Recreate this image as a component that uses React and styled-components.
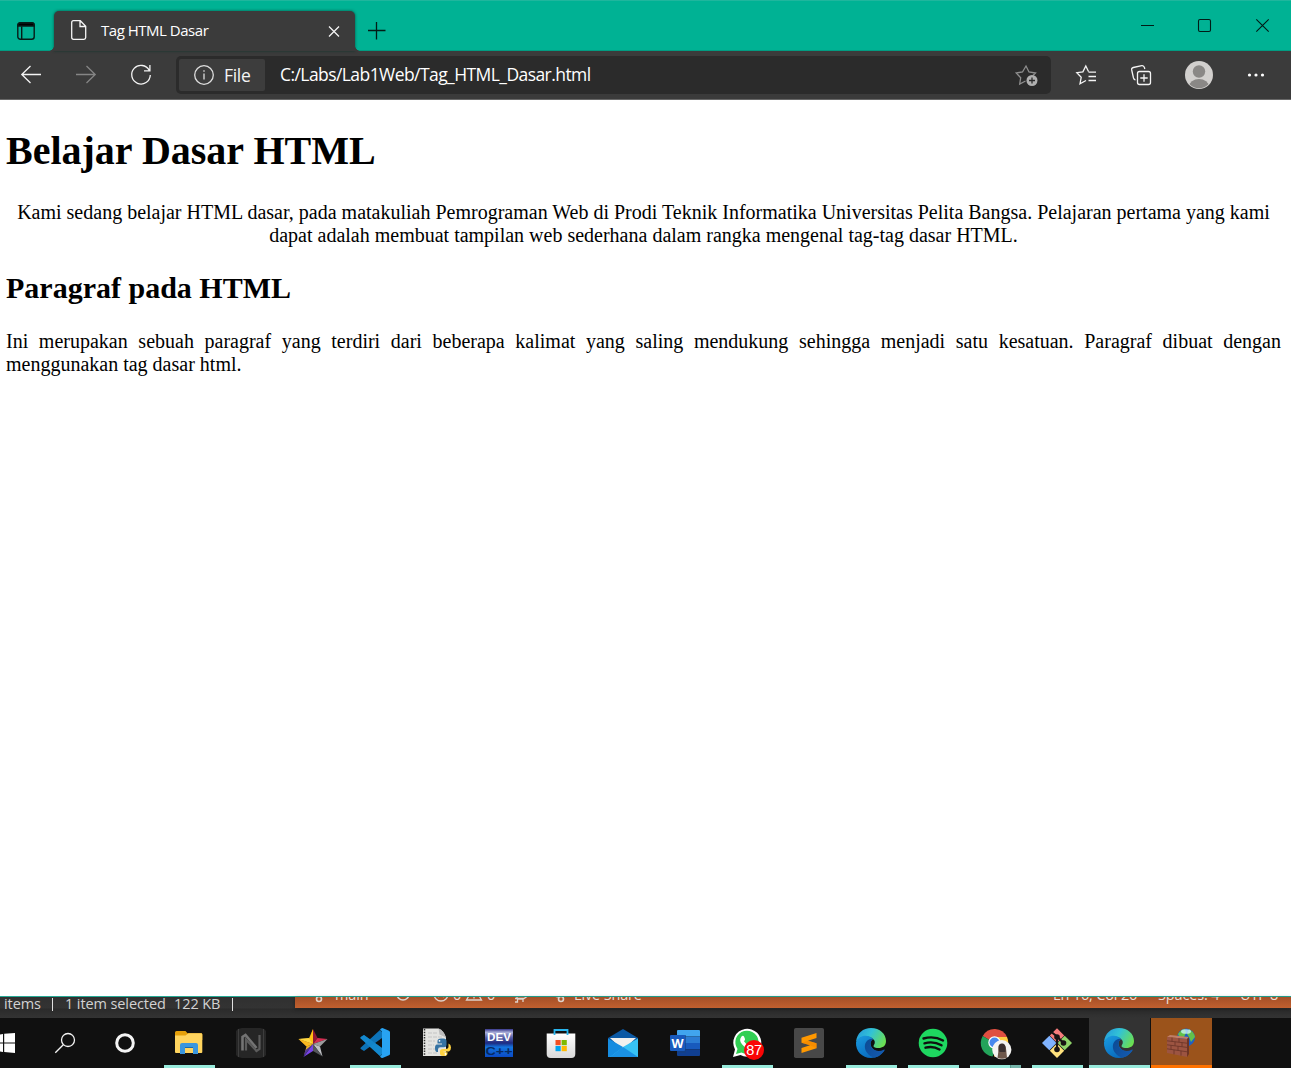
import React from "react";
import styled, { createGlobalStyle } from "styled-components";

const GlobalStyle = createGlobalStyle`
  html, body { margin: 0; padding: 0; }
  body { background: #fff; overflow: hidden; }
  * { box-sizing: border-box; }
`;

const ui = `"Open Sans", "Noto Sans", sans-serif`;

const Screen = styled.div`
  width: 1291px;
  height: 1068px;
  display: flex;
  flex-direction: column;
  overflow: hidden;
  font-family: ${ui};
`;

const Glyph = styled.svg`
  display: block;
  flex: none;
  overflow: visible;
  fill: none;
  stroke: ${(p) => p.$color || "#f4f4f4"};
  stroke-width: ${(p) => p.$weight || 1.3};
`;

const Art = styled.svg`
  display: block;
  flex: none;
  overflow: visible;
`;

/* ---------- title bar ---------- */

const TitleBar = styled.header`
  height: 51px;
  flex: none;
  display: flex;
  background: #00b294;
  border-top: 1px solid #1fb69d;
  box-shadow: inset 0 -1px 0 #019c82;
`;

const TabActions = styled.div`
  width: 54px;
  padding: 21px 0 0 17px;
`;

const Tab = styled.div`
  position: relative;
  width: 301px;
  height: 40px;
  margin-top: 10px;
  padding: 0 14px 2px 16px;
  display: flex;
  align-items: center;
  background: #3b3b3b;
  border-radius: 5px 5px 0 0;
  box-shadow: 0 0 3px rgba(0, 50, 40, 0.75);
  &::before, &::after {
    content: "";
    position: absolute;
    bottom: 0;
    width: 5px;
    height: 5px;
  }
  &::before { left: -5px; background: radial-gradient(circle at 0 0, transparent 4.5px, #3b3b3b 5px); }
  &::after { right: -5px; background: radial-gradient(circle at 100% 0, transparent 4.5px, #3b3b3b 5px); }
`;

const TabTitle = styled.span`
  flex: 1;
  margin-left: 14px;
  color: #fff;
  font-size: 15px;
  line-height: 20px;
  letter-spacing: -0.48px;
  white-space: nowrap;
`;

const TabClose = styled.div`
  padding-top: 2px;
`;

const NewTab = styled.div`
  width: 42px;
  padding: 21px 0 0 13px;
`;

const WindowButtons = styled.div`
  margin-left: auto;
  height: 49px;
  display: flex;
`;

const WindowButton = styled.div`
  width: ${(p) => p.$w || 57}px;
  display: flex;
  align-items: center;
  justify-content: center;
`;

/* ---------- toolbar ---------- */

const Toolbar = styled.div`
  height: 49px;
  flex: none;
  display: flex;
  align-items: center;
  background: #3b3b3b;
  border-bottom: 1px solid #686868;
`;

const Tool = styled.div`
  width: ${(p) => p.$w}px;
  display: flex;
  justify-content: center;
  align-items: center;
`;

const AddressBar = styled.div`
  width: 875px;
  height: 38px;
  margin-left: 6px;
  padding: 3px 12px 3px 3px;
  display: flex;
  align-items: center;
  background: #2b2b2b;
  border-radius: 5px;
`;

const FileChip = styled.div`
  width: 86px;
  height: 32px;
  padding-left: 14px;
  display: flex;
  align-items: center;
  gap: 9px;
  background: #3d3d3d;
  border-radius: 2px;
  color: #f5f5f5;
  font-size: 17.5px;
  letter-spacing: -0.3px;
`;

const Url = styled.span`
  flex: 1;
  margin-left: 15px;
  padding-bottom: 2px;
  color: #fff;
  font-size: 17.5px;
  line-height: 24px;
  letter-spacing: -0.57px;
  white-space: nowrap;
`;

/* ---------- document ---------- */

const Document = styled.main`
  height: 896px;
  flex: none;
  padding: 27px 10px 0 6px;
  background: #fff;
  color: #000;
  font-family: "Liberation Serif", "Times New Roman", serif;
  font-size: 20px;
  line-height: 23px;
`;

const Heading = styled.h1`
  margin: 0 0 27px;
  font-size: 40px;
  line-height: 47px;
`;

const SubHeading = styled.h2`
  margin: 24px 0 25px;
  font-size: 30px;
  line-height: 34px;
`;

const Paragraph = styled.p`
  margin: 0;
  text-align: ${(p) => p.$align};
`;

/* ---------- windows peeking above the taskbar ---------- */

const Behind = styled.div`
  height: 22px;
  flex: none;
  display: flex;
  background: linear-gradient(#303030, #333 50%, #2b2b2b 58%, #333);
  border-top: 1px solid #25a995;
`;

const ExplorerStatus = styled.div`
  width: 295px;
  height: 14px;
  padding-left: 4px;
  display: flex;
  align-items: center;
  color: #d2d2d2;
  font-size: 14.5px;
  line-height: 14px;
  white-space: nowrap;
`;

const StatusText = styled.span`
  width: ${(p) => p.$w}px;
  letter-spacing: -0.1px;
`;

const StatusRule = styled.i`
  width: 1px;
  height: 13px;
  margin-right: ${(p) => p.$gap || 0}px;
  background: #e0e0e0;
`;

const EditorStatus = styled.div`
  flex: 1;
  height: 11px;
  padding-left: 18px;
  display: flex;
  align-items: flex-end;
  overflow: hidden;
  background: linear-gradient(#a44f27, #c1602f);
  box-shadow: 0 1px 4px rgba(0, 0, 0, 0.35);
`;

const EditorText = styled.span`
  flex: none;
  width: ${(p) => p.$w}px;
  height: 24px;
  color: #ecdcd3;
  font-size: 14.5px;
  line-height: 22px;
  letter-spacing: -0.15px;
  white-space: nowrap;
`;

const EditorIcon = styled.span`
  flex: none;
  width: ${(p) => p.$w}px;
  height: 21px;
`;

/* ---------- taskbar ---------- */

const Taskbar = styled.footer`
  height: 50px;
  flex: none;
  display: flex;
  background: #101010;
`;

const SystemSlot = styled.div`
  width: ${(p) => p.$w}px;
  display: flex;
  align-items: center;
`;

const AppSlot = styled.div`
  width: 62px;
  height: 50px;
  display: flex;
  flex-direction: column;
  align-items: center;
  background: ${(p) => p.$fill || "transparent"};
  border-left: 1px solid #101010;
`;

const AppIcon = styled.div`
  position: relative;
  width: 31px;
  height: 47px;
  padding-top: 10px;
`;

const Indicator = styled.div`
  width: ${(p) => (p.$wide ? 61 : 51)}px;
  height: 3px;
  background: ${(p) => p.$color};
`;

const Badge = styled.span`
  position: absolute;
  left: 12px;
  top: 22px;
  width: 20px;
  height: 20px;
  border-radius: 50%;
  background: #fa0505;
  color: #fff;
  font: 14.500px/20px "Liberation Sans", Arial, sans-serif;
  text-align: center;
  letter-spacing: -0.2px;
`;

const Sq = ({ children }) => (
  <Art width="30" height="30" viewBox="0 0 30 30">{children}</Art>
);

const ExplorerIcon = () => (
  <Sq>
    <path d="M1 4.5Q1 3 2.500 3h9l2 2.200H27Q28.300 5.200 28.300 6.500V12H1z" fill="#e5a00a" />
    <path d="M1 7.500h10.500l3-2.300H27q1.300 0 1.300 1.300v17.400q0 1-1 1H2q-1 0-1-1z" fill="#ffd45e" />
    <path d="M6 26v-9q0-2 2-2h14q2 0 2 2v9h-5v-6.500h-8V26z" fill="#3a96dd" />
    <path d="M11 19h8v1h-8z" fill="#1769ad" />
  </Sq>
);

const NoxIcon = () => (
  <Sq>
    <path d="M2 1l4-1h18l4 1 2 2v24l-2 2-4 1H6l-4-1-2-2V3z" fill="#262626" />
    <path d="M2.500 1v28M27.500 1v28" stroke="#3d3d3d" />
    <path d="M6.500 22.500V9l3-2 11 13" fill="none" stroke="#747474" strokeWidth="2.600" />
    <path d="M23.500 7v14l-3 2L10 11.500v11" fill="none" stroke="#5c5c5c" strokeWidth="2.200" />
  </Sq>
);

const StarIcon = () => (
  <Sq>
    <path d="M15 1v15l-4-5z" fill="#ffb900" />
    <path d="M15 1l4.500 9L15 16z" fill="#8e1833" />
    <path d="M.5 11L11 10l4 6z" fill="#ffe45a" />
    <path d="M.5 11l8 7.500L15 16z" fill="#f5a719" />
    <path d="M19.500 10L29.500 11 15 16z" fill="#d62b50" />
    <path d="M29.500 11L22 18.500 15 16z" fill="#9b9b9d" />
    <path d="M22 18.500l2.500 10L15 16z" fill="#bfc0c4" />
    <path d="M24.500 28.500L15 23v-7z" fill="#55575b" />
    <path d="M15 16v7l-9.500 6z" fill="#7742e8" />
    <path d="M8.500 18.500L15 16 6.500 26z" fill="#f5b928" />
    <path d="M5.500 29l2-7L15 16z" fill="#4f3694" />
    <path d="M.5 11L11 10l4-9v15L8.500 18.500z" fill="#ffc928" opacity=".5" />
  </Sq>
);

const CodeIcon = () => (
  <Sq>
    <path d="M.8 10.500L20 28l2-2v-6L4 7 .8 9q-.8.700 0 1.500z" fill="#0f80c5" />
    <path d="M.8 19.500L20 2l2 2v6L4 23 .8 21q-.8-.8 0-1.500z" fill="#0d73b8" />
    <path d="M.8 10.500L20 28l2-2v-6L4 7 .8 9q-.8.700 0 1.500z" fill="#168bd2" opacity=".7" />
    <path d="M22.500 0L29 2.800q1 .5 1 1.500v21.400q0 1-1 1.500L22.500 30q-1.500 0-2.500-1.500l2-2V3.500l-2-2Q21 0 22.500 0z" fill="#28a3f2" />
  </Sq>
);

const PythonIcon = () => (
  <Sq>
    <path d="M1 .5h15.500q5 2 7.500 9v18.500H1z" fill="#e4e4e1" />
    <path d="M16.500.5l1 6 6.500 3q-2-7-7.500-9z" fill="#bcbcbc" />
    <path d="M2.500 1v27" stroke="#333" strokeWidth="1.500" strokeDasharray="1.500 1.200" />
    <path d="M6 5h9M6 9h14M6 13h7M6 17h6M6 21h7M6 25h10" stroke="#c4c4c4" strokeDasharray="4 1" />
    <path d="M15.500 15.500V13q0-2.500 3.500-2.500h2.500q3 0 3 2.500v4q0 2.300-2.500 2.300h-3.500q-2.500 0-2.500 2.300V24H15q-2 0-2-4t2.500-3.500h4.500v-1z" fill="#3673a3" />
    <path d="M26.500 15.500v3q0 2.500-3 2.500h-3q-2.500 0-2.500 2.500v2q0 2.500 3.500 2.500 4 0 4-2.500v-1.200h-4v-.8H27q2-1 2-4t-2.500-4z" fill="#ffd23f" />
    <circle cx="17.500" cy="12.800" r=".9" fill="#fff" /><circle cx="23.500" cy="26" r=".9" fill="#fff" />
  </Sq>
);

const DevLabel = styled.text`
  font: 700 11.5px "Liberation Sans", Arial, sans-serif;
  text-anchor: middle;
`;

const DevIcon = () => (
  <Sq>
    <defs>
      <linearGradient id="dev" x2="0" y2="1">
        <stop stopColor="#34348a" /><stop offset=".12" stopColor="#a9aed8" />
        <stop offset=".3" stopColor="#5961a8" /><stop offset=".5" stopColor="#1d2a80" />
        <stop offset=".65" stopColor="#1475df" /><stop offset="1" stopColor="#0a49c4" />
      </linearGradient>
    </defs>
    <path d="M1 1h28v28H1z" fill="url(#dev)" />
    <DevLabel x="15" y="13" fill="#fff" textLength="24" lengthAdjust="spacingAndGlyphs">DEV</DevLabel>
    <DevLabel x="15" y="27" fill="#072a62" textLength="27" lengthAdjust="spacingAndGlyphs">C++</DevLabel>
  </Sq>
);

const StoreIcon = () => (
  <Sq>
    <defs><linearGradient id="bag" x2="0" y2="1"><stop stopColor="#fff" /><stop offset="1" stopColor="#d9d9d9" /></linearGradient></defs>
    <path d="M.7 5.500h28.600V26q0 4-4 4H4.700q-4 0-4-4z" fill="url(#bag)" />
    <path d="M8.500 7V2h13v5" fill="none" stroke="#29b5ee" strokeWidth="1.800" />
    <path d="M9.500 12h5.200v5.200H9.500z" fill="#f25022" /><path d="M15.600 12h5.200v5.200h-5.200z" fill="#7fba00" />
    <path d="M9.500 18h5.200v5.200H9.500z" fill="#00a4ef" /><path d="M15.600 18h5.200v5.200h-5.200z" fill="#ffb900" />
  </Sq>
);

const MailIcon = () => (
  <Sq>
    <path d="M0 10L15 1l15 9v8H0z" fill="#0c59a4" />
    <path d="M2 10h26L17 20h-4z" fill="#f2f1ef" />
    <path d="M0 10.500L15 19 4 29H0z" fill="#168ce0" />
    <path d="M30 10.500V29H2L15 19z" fill="#37c2f5" />
    <path d="M2 29l13-10 15 10z" fill="#1a91e4" />
  </Sq>
);

const WordLabel = styled.text`
  font: 700 12.5px "Open Sans", sans-serif;
  fill: #fff;
  text-anchor: middle;
`;

const WordIcon = () => (
  <Sq>
    <path d="M7 3q0-1 1-1h21q1 0 1 1v5.500H7z" fill="#41a5ee" /><path d="M7 8.500h23V15H7z" fill="#2b7cd3" />
    <path d="M7 15h23v6.500H7z" fill="#185abd" /><path d="M7 21.500h23V27q0 1-1 1H8q-1 0-1-1z" fill="#103f91" />
    <path d="M7 7h9v18H7z" fill="#153f7f" opacity=".6" />
    <rect y="7" width="15" height="16" rx="1" fill="#185abd" />
    <WordLabel x="7.500" y="19.500">W</WordLabel>
  </Sq>
);

const WhatsAppIcon = () => (
  <Sq>
    <path d="M1 29l2-7.500A14 14 0 1 1 8.500 27z" fill="#fff" />
    <path d="M4 26l1.500-5A11.600 11.600 0 1 1 9.500 24.500z" fill="#31cf53" />
    <path d="M9.500 8.500q1.500-1.500 2.500 0l1 2.500q.3 1-1 2.200 2 3.300 5.300 4.600l1.500-1.700q.5-.6 3.700 1.200.5 3.500-4 4-4.500-.2-8.500-5-3.500-4-.5-7.800z" fill="#fff" />
  </Sq>
);

const SublimeIcon = () => (
  <Sq>
    <rect width="30" height="30" rx="1.800" fill="#484848" />
    <path d="M7.500 9.800L22.500 5v5L14 12.700l8.500 2.500v5L7.500 25v-5l8.500-2.700-8.500-2.500z" fill="#ff9800" />
    <path d="M7.500 14.800l6.500-2.100 8.500 2.500v5L16 17.300z" fill="#f08300" opacity=".6" />
  </Sq>
);

const EdgeIcon = ({ id }) => (
  <Sq>
    <defs>
      <linearGradient id={id + "a"} x1="0" y1=".2" x2="1" y2=".6">
        <stop stopColor="#249bdc" /><stop offset=".45" stopColor="#32c2d6" /><stop offset="1" stopColor="#6bdf52" />
      </linearGradient>
      <linearGradient id={id + "b"} x2=".7" y2="1"><stop stopColor="#1a9ce0" /><stop offset="1" stopColor="#0765ba" /></linearGradient>
      <linearGradient id={id + "c"} y2=".6"><stop stopColor="#0b4a93" /><stop offset="1" stopColor="#1459ad" /></linearGradient>
    </defs>
    <path d="M0 14C1 5 7 0 15 0c9 0 15 6 15 13 0 5-3.500 7-7.500 7-4.500 0-5.500-1.500-4.700-2.700C19.500 15 19 12.500 17 11 12 7 4 8 0 14z" fill={`url(#${id}a)`} />
    <path d="M0 14.500C2.500 7 12 5.500 17 11c-2.500 2-3 4-2.200 6.500C16 22 22 25 28.300 22.500 25.500 27 21 30 15 30 6 30-.5 23 0 14.500z" fill={`url(#${id}b)`} />
    <path d="M13 11.500C8 14 8 20 10.500 24c2.500 4 6.500 6 9 5.300 4-1.300 7-4 9-6.900.5-1-.3-1-.8-.7-5 2.500-11.700 1.300-13-4.700C14.300 14.500 15 12.500 17 11c-1.500-.5-3 0-4 .5z" fill={`url(#${id}c)`} />
  </Sq>
);

const SpotifyIcon = () => (
  <Sq>
    <circle cx="15" cy="15" r="14.300" fill="#1ed760" />
    <path d="M5.500 10.500q10.500-3 19.500 2M6.500 15.300q9-2.600 17 2M7.500 19.700q7.500-2 14 1.800" fill="none" stroke="#101010" strokeWidth="2.400" strokeLinecap="round" />
  </Sq>
);

const ChromeIcon = () => (
  <Sq>
    <path d="M14.500 15L2.700 8A13.600 13.600 0 0 1 27 9z" fill="#df4f41" />
    <path d="M14.500 15V9H27a13.600 13.600 0 0 1-13 19.500z" fill="#ffcd42" />
    <path d="M14.500 15l1 6-3 7.500A13.600 13.600 0 0 1 2.700 8z" fill="#23a35a" />
    <circle cx="14.500" cy="14.500" r="6.200" fill="#fff" /><circle cx="14.500" cy="14.500" r="5" fill="#4688ee" />
    <circle cx="21.800" cy="21.700" r="9.600" fill="#f4f3f1" />
    <path d="M17.500 30l.8-6q-.6-8 3.700-8.300 4 .3 4.200 6.300l.8 7.700q-4.500 2-9.500.3z" fill="#6e574a" />
    <path d="M18.500 19q0-3.500 3.500-3.500T25.500 20v4h-6z" fill="#3a302f" />
  </Sq>
);

const GitIcon = () => (
  <Sq>
    <path d="M15 .3l7.200 7.200-7.200 7.200-7.200-7.200z" fill="#f77c7c" />
    <path d="M7.300 7.800l7.200 7.200-7.200 7.200L0 15z" fill="#80b3ff" />
    <path d="M22.700 7.800L30 15l-7.300 7.200-7.200-7.200z" fill="#8fd46a" />
    <path d="M15 15.500l7.200 7.200L15 30l-7.200-7.300z" fill="#ffe27d" />
    <path d="M10 4.500l5 4V22M15 8.500l6.500 6.500" fill="none" stroke="#171313" strokeWidth="2.200" />
    <circle cx="15" cy="9" r="2.800" fill="#171313" /><circle cx="21.500" cy="15" r="2.800" fill="#171313" /><circle cx="15" cy="21.500" r="2.800" fill="#171313" />
  </Sq>
);

const FirewallIcon = () => (
  <Sq>
    <circle cx="20" cy="9.500" r="9" fill="#1d5fc4" />
    <path d="M12 6q3-4.500 7-5l1 4-2 4-4 1zM23 1q5 3 6 8l-4 5-2-5-2-3z" fill="#62c04b" />
    <ellipse cx="20" cy="3.500" rx="5" ry="2.300" fill="#d2f5ff" opacity=".75" />
    <path d="M1 9l3-2 19 2-2 2z" fill="#c07e68" />
    <path d="M21 11l2-2v17l-2 3z" fill="#6d3424" />
    <path d="M1 9l20 2v18L1 25z" fill="#9c5441" />
    <path d="M1 12.800l20 2.400M1 16.800l20 2.600M1 20.800l20 3M6 9.600v3.800M13 10.300v3.900M9 13.800v3.900M16 14.600v4M5 17.300v4M12 18.200v4.200M8 21.900v4.400M15 22.900v4.700" stroke="#6a3427" strokeWidth=".8" />
  </Sq>
);

const mint = "#98ebdc";
const apps = [
  { name: "explorer", icon: <ExplorerIcon />, bar: mint },
  { name: "nox", icon: <NoxIcon /> },
  { name: "star", icon: <StarIcon /> },
  { name: "code", icon: <CodeIcon />, bar: mint },
  { name: "python", icon: <PythonIcon /> },
  { name: "dev", icon: <DevIcon /> },
  { name: "store", icon: <StoreIcon /> },
  { name: "mail", icon: <MailIcon /> },
  { name: "word", icon: <WordIcon /> },
  { name: "whatsapp", icon: <WhatsAppIcon />, bar: mint, badge: "87" },
  { name: "sublime", icon: <SublimeIcon /> },
  { name: "edge", icon: <EdgeIcon id="e1" />, bar: mint },
  { name: "spotify", icon: <SpotifyIcon />, bar: mint },
  { name: "chrome", icon: <ChromeIcon />, bar: `linear-gradient(90deg, ${mint} 40px, #5b9b90 40px, #5b9b90 41px, #76b5aa 41px)` },
  { name: "git", icon: <GitIcon />, bar: mint },
  { name: "edge-active", icon: <EdgeIcon id="e2" />, bar: mint, fill: "#333", wide: true },
  { name: "firewall", icon: <FirewallIcon />, bar: "#ff7200", fill: "#9b531b", wide: true },
];

export default function App() {
  return (
    <Screen>
      <GlobalStyle />
      <TitleBar>
        <TabActions>
          <Glyph width="18" height="18" viewBox="0 0 18 18" $color="#071c18" $weight={1.4}>
            <rect x=".8" y=".8" width="16.400" height="16.400" rx="2.500" />
            <path d="M1 4V3q0-2 2-2h12q2 0 2 2v1z" fill="#000" />
            <path d="M4.700 4.500V17" />
          </Glyph>
        </TabActions>
        <Tab>
          <Glyph width="17" height="20" viewBox="0 0 17 20">
            <path d="M3.500.7h6.800l5.400 5.500v11.300q0 1.800-1.800 1.800H3.500q-1.800 0-1.800-1.800v-15Q1.700.7 3.500.7zM10 1v5.500h5.500" />
          </Glyph>
          <TabTitle>Tag HTML Dasar</TabTitle>
          <TabClose>
            <Glyph width="14" height="12" viewBox="0 0 14 12">
              <path d="M2 1.500l10 10M12 1.500l-10 10" />
            </Glyph>
          </TabClose>
        </Tab>
        <NewTab>
          <Glyph width="18" height="18" viewBox="0 0 18 18" $color="#021c16" $weight={1.3}>
            <path d="M0 8.500h17.500M8.500 0v17.500" />
          </Glyph>
        </NewTab>
        <WindowButtons>
          <WindowButton>
            <Glyph width="13" height="13" viewBox="0 0 13 13" $color="#001b16" $weight={1}><path d="M0 6.500h13" /></Glyph>
          </WindowButton>
          <WindowButton>
            <Glyph width="13" height="13" viewBox="0 0 13 13" $color="#001b16" $weight={1.1}><rect x=".5" y=".5" width="12" height="12" rx="1.500" /></Glyph>
          </WindowButton>
          <WindowButton $w={58}>
            <Glyph width="13" height="13" viewBox="0 0 13 13" $color="#001b16" $weight={1.1}><path d="M.3.3l12.400 12.400M12.700.3L.3 12.700" /></Glyph>
          </WindowButton>
        </WindowButtons>
      </TitleBar>

      <Toolbar>
        <Tool $w={61}>
          <Glyph width="20" height="20" viewBox="0 0 20 20"><path d="M20 9.500H.8M9.500 1L.8 9.500 9.500 18" /></Glyph>
        </Tool>
        <Tool $w={50}>
          <Glyph width="20" height="20" viewBox="0 0 20 20" $color="#858585"><path d="M0 9.500h19.200M10.500 1l8.700 8.500-8.700 8.500" /></Glyph>
        </Tool>
        <Tool $w={59}>
          <Glyph width="20" height="20" viewBox="0 0 20 20"><path d="M18.300 5.500A9.300 9.300 0 1 0 19.300 10M18.900 0v5.900H13" /></Glyph>
        </Tool>
        <AddressBar>
          <FileChip>
            <Glyph width="22" height="20" viewBox="0 0 22 20" $color="#dedede">
              <circle cx="11" cy="10" r="9.300" /><path d="M11 8.500v6M11 5.200v1.600" />
            </Glyph>
            File
          </FileChip>
          <Url>C:/Labs/Lab1Web/Tag_HTML_Dasar.html</Url>
          <Glyph width="24" height="22" viewBox="0 0 24 22" $color="#8e8e8e">
            <path d="M10.500 17l-5.800 3 1-6.300L1.200 9l6.300-1L11 2l3 6 6.500 1-2.500 2.500" />
            <circle cx="17" cy="16.500" r="5.500" fill="#b0b0b0" stroke="none" />
            <path d="M14 16.500h6M17 13.500v6" stroke="#2b2b2b" />
          </Glyph>
        </AddressBar>
        <Tool $w={70}>
          <Glyph width="20" height="20" viewBox="0 0 20 20">
            <path d="M10 15.500l-6 3.300 1.200-6.500L.8 7.700l6.100-.9L9.800 1l2.700 5.500M12.500 7.200H20M12.500 11.500H20M12.500 15.500H20" />
          </Glyph>
        </Tool>
        <Tool $w={40}>
          <Glyph width="20" height="20" viewBox="0 0 20 20">
            <rect x="6.500" y="6.500" width="13" height="13" rx="2" />
            <path d="M13 9.300v7.400M9.300 13h7.400M4.500 14.800Q3 14.800 2.500 13L.7 5Q.3 3 2.300 2.500L10.800.6q2-.3 2.700 2l.3 1.400" />
          </Glyph>
        </Tool>
        <Tool $w={76}>
          <Art width="28" height="28" viewBox="0 0 28 28">
            <defs><clipPath id="avatar"><circle cx="14" cy="14" r="13.200" /></clipPath></defs>
            <circle cx="14" cy="14" r="14" fill="#d2d0ce" />
            <g clipPath="url(#avatar)" fill="#8a8886"><circle cx="14" cy="10.500" r="6.200" /><ellipse cx="14" cy="25.500" rx="10" ry="7.500" /></g>
          </Art>
        </Tool>
        <Tool $w={38}>
          <Art width="18" height="4" viewBox="0 0 18 4" fill="#fff"><circle cx="2.500" cy="2" r="1.600" /><circle cx="9" cy="2" r="1.600" /><circle cx="15.500" cy="2" r="1.600" /></Art>
        </Tool>
      </Toolbar>

      <Document>
        <Heading>Belajar Dasar HTML</Heading>
        <Paragraph $align="center">
          Kami sedang belajar HTML dasar, pada matakuliah Pemrograman Web di Prodi Teknik Informatika Universitas Pelita Bangsa. Pelajaran pertama yang kami dapat adalah membuat tampilan web sederhana dalam rangka mengenal tag-tag dasar HTML.
        </Paragraph>
        <SubHeading>Paragraf pada HTML</SubHeading>
        <Paragraph $align="justify">
          Ini merupakan sebuah paragraf yang terdiri dari beberapa kalimat yang saling mendukung sehingga menjadi satu kesatuan. Paragraf dibuat dengan menggunakan tag dasar html.
        </Paragraph>
      </Document>

      <Behind>
        <ExplorerStatus>
          <StatusText $w={48}>items</StatusText>
          <StatusRule $gap={12} />
          <StatusText $w={109}>1 item selected</StatusText>
          <StatusText $w={58}>122 KB</StatusText>
          <StatusRule />
        </ExplorerStatus>
        <EditorStatus>
          <EditorIcon $w={22}>
            <Glyph width="12" height="16" viewBox="0 0 12 16" $color="#e0d2ca" $weight={1.6}><circle cx="6" cy="12" r="2.500" /><path d="M6 9V3" /></Glyph>
          </EditorIcon>
          <EditorText $w={61}>main</EditorText>
          <EditorIcon $w={37}>
            <Glyph width="14" height="14" viewBox="0 0 14 14" $color="#e0d2ca" $weight={1.6}><circle cx="7" cy="7" r="6" /></Glyph>
          </EditorIcon>
          <EditorIcon $w={20}>
            <Glyph width="16" height="14" viewBox="0 0 16 14" $color="#e0d2ca"><circle cx="8" cy="7" r="7" /><path d="M5 10l6-6M5 4l6 6" /></Glyph>
          </EditorIcon>
          <EditorText $w={13}>0</EditorText>
          <EditorIcon $w={21}>
            <Glyph width="16" height="14" viewBox="0 0 16 14" $color="#e0d2ca"><path d="M8 0l7.500 13H.5zM8 5v4M8 10v1.500" /></Glyph>
          </EditorIcon>
          <EditorText $w={27}>0</EditorText>
          <EditorIcon $w={40}>
            <Glyph width="14" height="16" viewBox="0 0 14 16" $color="#e0d2ca"><path d="M1 15h2.500v-3H9v3M1 11.500h9l3-2M3 9v3" /></Glyph>
          </EditorIcon>
          <EditorIcon $w={20}>
            <Glyph width="12" height="16" viewBox="0 0 12 16" $color="#e0d2ca" $weight={1.6}><circle cx="7" cy="12" r="2.500" /><path d="M1 9l3 1" /></Glyph>
          </EditorIcon>
          <EditorText $w={479}>Live Share</EditorText>
          <EditorText $w={105}>Ln 16, Col 26</EditorText>
          <EditorText $w={82}>Spaces: 4</EditorText>
          <EditorText $w={50}>UTF-8</EditorText>
        </EditorStatus>
      </Behind>

      <Taskbar>
        <SystemSlot $w={55}>
          <Art width="15" height="20" viewBox="0 0 15 20" fill="#fff"><path d="M0 1.500l3-.5v8.500H0zM4.200.8L15 0v9.500H4.200zM0 10.600h3V19l-3-.4zM4.200 10.600H15V20l-10.800-1z" /></Art>
        </SystemSlot>
        <SystemSlot $w={60}>
          <Glyph width="20" height="20" viewBox="0 0 20 20"><circle cx="13" cy="7" r="6.500" /><path d="M8.300 11.800L.3 19.800" /></Glyph>
        </SystemSlot>
        <SystemSlot $w={43}>
          <Glyph width="20" height="20" viewBox="0 0 20 20" $weight={3}><circle cx="10" cy="10" r="8.300" /></Glyph>
        </SystemSlot>
        {apps.map((app) => (
          <AppSlot key={app.name} $fill={app.fill}>
            <AppIcon>
              {app.icon}
              {app.badge && <Badge>{app.badge}</Badge>}
            </AppIcon>
            {app.bar && <Indicator $color={app.bar} $wide={app.wide} />}
          </AppSlot>
        ))}
      </Taskbar>
    </Screen>
  );
}
